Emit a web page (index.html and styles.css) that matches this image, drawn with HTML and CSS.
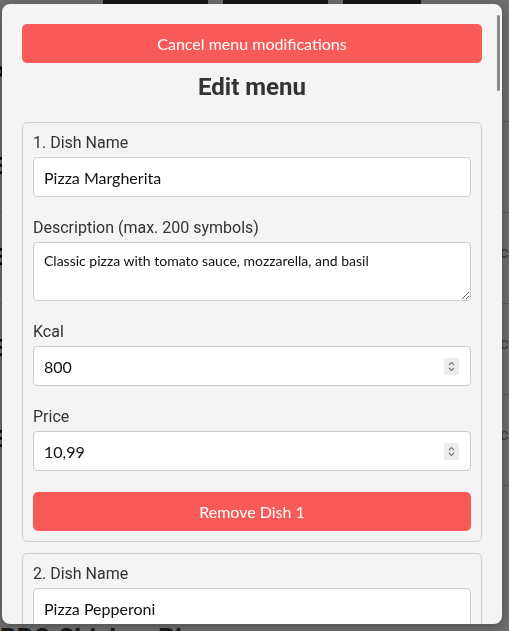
FILE: index.html
```html
<!DOCTYPE html>
<html lang="en">
<head>
    <meta charset="UTF-8">
    <meta name="viewport" content="width=device-width, initial-scale=1.0">
    <title>Edit menu</title>
    <link rel="stylesheet" href="styles.css">
</head>
<body>
    <div class="page">
        <nav class="tabs">
            <span class="tab">Overview</span>
            <span class="tab">Tables</span>
            <span class="tab tab-active">Menu</span>
        </nav>
        <div class="menu-list">
            <div class="menu-row"><span class="row-title">Pizza</span><span class="row-side">|</span></div>
            <div class="menu-row"><span class="row-title">E</span><span class="row-side">|</span></div>
            <div class="menu-row"><span class="row-title">E</span><span class="row-side">kcal</span></div>
            <div class="menu-row"><span class="row-title">E</span><span class="row-side">kcal</span></div>
            <div class="menu-row"><span class="row-title">E</span><span class="row-side">kcal</span></div>
        </div>
        <h2 class="page-dish">BBQ Chicken Pizza</h2>
    </div>

    <div class="overlay">
        <div class="modal">
            <div class="modal-body">
                <button class="btn-red btn-cancel">Cancel menu modifications</button>
                <h2>Edit menu</h2>

                <div class="dish-card">
                    <div class="field">
                        <label for="name1">1. Dish Name</label>
                        <input type="text" id="name1" value="Pizza Margherita">
                    </div>
                    <div class="field">
                        <label for="desc1">Description (max. 200 symbols)</label>
                        <textarea id="desc1" maxlength="200">Classic pizza with tomato sauce, mozzarella, and basil</textarea>
                    </div>
                    <div class="field">
                        <label for="kcal1">Kcal</label>
                        <div class="num-box">
                            <input type="text" id="kcal1" value="800">
                            <span class="spinner">
                                <svg width="15" height="17" viewBox="0 0 15 17"><path d="M5 7 L7.5 4.5 L10 7 M5 10 L7.5 12.5 L10 10" fill="none" stroke="#7a7a7a" stroke-width="1.1"/></svg>
                            </span>
                        </div>
                    </div>
                    <div class="field">
                        <label for="price1">Price</label>
                        <div class="num-box">
                            <input type="text" id="price1" value="10,99">
                            <span class="spinner">
                                <svg width="15" height="17" viewBox="0 0 15 17"><path d="M5 7 L7.5 4.5 L10 7 M5 10 L7.5 12.5 L10 10" fill="none" stroke="#7a7a7a" stroke-width="1.1"/></svg>
                            </span>
                        </div>
                    </div>
                    <button class="btn-red">Remove Dish 1</button>
                </div>

                <div class="dish-card">
                    <div class="field">
                        <label for="name2">2. Dish Name</label>
                        <input type="text" id="name2" value="Pizza Pepperoni">
                    </div>
                    <div class="field">
                        <label for="desc2">Description (max. 200 symbols)</label>
                        <textarea id="desc2" maxlength="200">Spicy pepperoni with mozzarella and tomato sauce</textarea>
                    </div>
                </div>
            </div>
            <div class="scroll-thumb"></div>
        </div>
    </div>
</body>
</html>
```

FILE: styles.css
```css
body {
    margin: 0;
    font-family: Roboto, "Liberation Sans", sans-serif;
    background-color: #dcdcdc;
    height: 100vh;
    overflow: hidden;
}

/* page behind the modal */
.page {
    display: flex;
    flex-direction: column;
    height: 100%;
}

.tabs {
    display: flex;
    gap: 15px;
    padding-left: 103px;
}

.tab {
    background: #333;
    color: #eee;
    font-size: 16px;
    padding: 2px 22px 10px;
    width: 61px;
    text-align: center;
}

.tab-active {
    color: #3a8fe0;
    width: 34px;
}

.menu-list {
    flex: 1;
}

.menu-row {
    display: flex;
    justify-content: space-between;
    height: 90px;
    border-bottom: 1px solid #bbb;
    font-size: 24px;
    font-weight: bold;
}

.row-title {
    padding-top: 30px;
    margin-left: -10px;
}

.row-side {
    padding-top: 30px;
    margin-right: -12px;
    font-weight: normal;
    color: #777;
    font-size: 16px;
}

.modal .page-dish,
.page-dish {
    margin: 0 0 -22px;
    font-size: 26px;
    color: #333;
    padding-left: 0;
    text-align: left;
}

/* modal */
.overlay {
    position: fixed;
    inset: 0;
    background: rgba(0, 0, 0, 0.5);
}

.modal {
    position: absolute;
    left: 2px;
    top: 4px;
    width: 500px;
    height: 620px;
    background: #f4f4f4;
    border-radius: 8px;
    overflow: hidden;
    box-shadow: 0 2px 12px rgba(0, 0, 0, 0.3);
}

.modal-body {
    height: 100%;
    box-sizing: border-box;
    padding: 20px;
    overflow-y: auto;
    scrollbar-width: none;
}

.scroll-thumb {
    position: absolute;
    right: 2px;
    top: 11px;
    width: 3px;
    height: 76px;
    border-radius: 2px;
    background: #8c8c8c;
}

.btn-red {
    display: block;
    width: 100%;
    height: 39px;
    border: none;
    border-radius: 5px;
    background-color: #f85a5a;
    color: #fff;
    font-family: Lato, "Noto Sans", sans-serif;
    font-size: 16px;
    cursor: pointer;
}

.btn-cancel {
    margin-bottom: 10px;
}

.modal h2 {
    margin: 0 0 21px;
    text-align: center;
    font-size: 24px;
    line-height: 28px;
    color: #333;
}

.dish-card {
    border: 1px solid #cfcfcf;
    border-radius: 5px;
    padding: 10px;
    margin-bottom: 11px;
}

.field {
    margin-bottom: 21px;
}

label {
    display: block;
    margin-bottom: 5px;
    font-size: 16px;
    line-height: 19px;
    color: #333;
}

input[type="text"],
textarea {
    display: block;
    width: 100%;
    box-sizing: border-box;
    border: 1px solid #cdcdcd;
    border-radius: 4px;
    background: #fff;
    color: #111;
    font-family: Lato, "Noto Sans", sans-serif;
    font-size: 16px;
}

input[type="text"] {
    height: 40px;
    padding: 0 10px;
}

textarea {
    height: 59px;
    padding: 9px 10px;
    font-size: 14px;
    resize: vertical;
}

.num-box {
    display: flex;
    align-items: center;
    height: 40px;
    box-sizing: border-box;
    border: 1px solid #cdcdcd;
    border-radius: 4px;
    background: #fff;
    padding-right: 11px;
}

.num-box input[type="text"] {
    flex: 1;
    border: none;
    height: 38px;
    background: transparent;
}

.spinner {
    display: flex;
    background: #ececef;
    border-radius: 2px;
}
```
